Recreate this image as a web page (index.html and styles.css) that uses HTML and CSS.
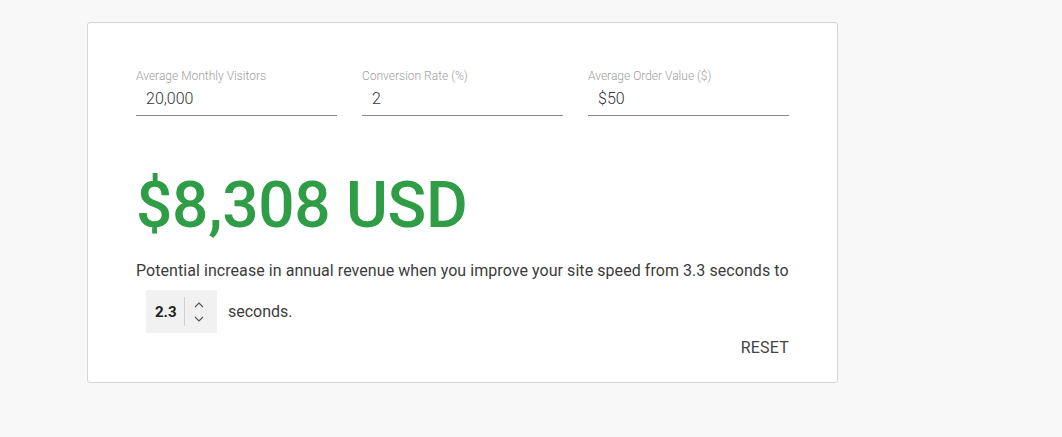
FILE: index.html
```html
<!DOCTYPE html>
<html>
<head>
<meta charset="utf-8">
<link rel="stylesheet" href="styles.css">
</head>
<body>
<div class="card">
  <div class="fields">
    <div class="field">
      <div class="label">Average Monthly Visitors</div>
      <div class="value">20,000</div>
    </div>
    <div class="field">
      <div class="label">Conversion Rate (%)</div>
      <div class="value">2</div>
    </div>
    <div class="field">
      <div class="label">Average Order Value ($)</div>
      <div class="value">$50</div>
    </div>
  </div>
  <div class="amount">$8,308 USD</div>
  <p class="desc">Potential increase in annual revenue when you improve your site speed from 3.3 seconds to</p>
  <div class="speed-row">
    <div class="spinner">
      <span class="num">2.3</span>
      <span class="divider"></span>
      <span class="arrows">
        <svg width="10" height="6" viewBox="0 0 10 6"><path d="M1 5 L5 1 L9 5" fill="none" stroke="#555" stroke-width="1.2"/></svg>
        <svg width="10" height="6" viewBox="0 0 10 6"><path d="M1 1 L5 5 L9 1" fill="none" stroke="#555" stroke-width="1.2"/></svg>
      </span>
    </div>
    <span class="unit">seconds.</span>
  </div>
  <div class="actions"><span class="reset">RESET</span></div>
</div>
</body>
</html>
```
FILE: styles.css
```css
html, body { margin: 0; padding: 0; }
body {
  background: #f8f8f8;
  font-family: Roboto, "Liberation Sans", sans-serif;
  color: #333;
  height: 437px;
  padding: 22px 0 0 87px;
  box-sizing: border-box;
}
.card {
  width: 751px;
  height: 361px;
  box-sizing: border-box;
  background: #fff;
  border: 1px solid #d6d6d6;
  border-radius: 3px;
  padding: 46px 48px 0 48px;
}
.fields {
  display: flex;
  gap: 25px;
}
.field {
  width: 201px;
  border-bottom: 1px solid #8a8a8a;
}
.label {
  font-size: 12px;
  font-weight: 300;
  color: #9e9e9e;
  line-height: 14px;
}
.value {
  font-size: 16px;
  font-weight: 300;
  color: #333;
  padding: 6px 0 7px 10px;
  line-height: 19px;
}
.amount {
  margin-top: 55px;
  font-size: 64px;
  font-weight: 500;
  color: #2e9d46;
  line-height: 70px;
  letter-spacing: -0.3px;
}
.desc {
  margin: 20px 0 0 0;
  font-size: 16px;
  line-height: 20px;
  color: #3c3c3c;
  letter-spacing: 0.06px;
}
.speed-row {
  display: flex;
  align-items: center;
  margin: 9px 0 0 10px;
}
.spinner {
  display: flex;
  align-items: center;
  width: 71px;
  height: 43px;
  background: #f1f1f1;
  box-sizing: border-box;
  padding-left: 9px;
}
.num {
  font-size: 15px;
  font-weight: 700;
  color: #222;
  width: 29px;
}
.divider {
  width: 1px;
  height: 29px;
  background: #d0d0d0;
}
.arrows {
  display: flex;
  flex-direction: column;
  gap: 8px;
  margin-left: 9px;
}
.arrows svg { display: block; }
.unit {
  margin-left: 11px;
  font-size: 16px;
  color: #3c3c3c;
}
.actions {
  display: flex;
  justify-content: flex-end;
  margin-top: 5px;
}
.reset {
  font-size: 16px;
  font-weight: 400;
  color: #444;
  letter-spacing: 0.2px;
}
```
